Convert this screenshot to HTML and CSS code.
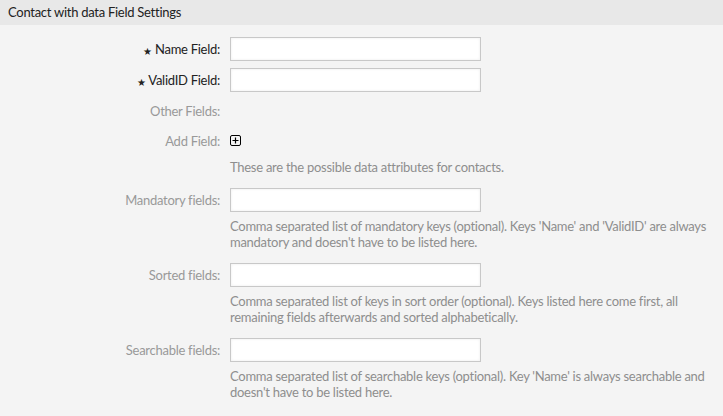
FILE: index.html
```html
<!DOCTYPE html>
<html lang="en">
<head>
    <meta charset="UTF-8">
    <title>Contact with data Field Settings</title>
    <link rel="stylesheet" href="styles.css">
</head>
<body>
    <div class="widget">
        <div class="widget-header">
            <h2>Contact with data Field Settings</h2>
        </div>
        <div class="widget-content">
            <fieldset class="table-like">
                <label class="mandatory" for="NameField"><span class="marker">&#9733;</span> Name Field:</label>
                <div class="field"><input type="text" id="NameField"></div>

                <label class="mandatory" for="ValidIDField"><span class="marker">&#9733;</span> ValidID Field:</label>
                <div class="field"><input type="text" id="ValidIDField"></div>

                <label>Other Fields:</label>
                <div class="field"></div>

                <label>Add Field:</label>
                <div class="field">
                    <a href="#" class="add-field" title="Add Field">
                        <svg width="11" height="11" viewBox="0 0 11 11">
                            <rect x="0.5" y="0.5" width="10" height="10" rx="1.5" fill="none" stroke="#000" stroke-width="1"/>
                            <path d="M5.5 2.5v6M2.5 5.5h6" stroke="#000" stroke-width="1.2"/>
                        </svg>
                    </a>
                    <p class="description">These are the possible data attributes for contacts.</p>
                </div>

                <label for="MandatoryFields">Mandatory fields:</label>
                <div class="field">
                    <input type="text" id="MandatoryFields">
                    <p class="description">Comma separated list of mandatory keys (optional). Keys 'Name' and 'ValidID' are always mandatory and doesn't have to be listed here.</p>
                </div>

                <label for="SortedFields">Sorted fields:</label>
                <div class="field">
                    <input type="text" id="SortedFields">
                    <p class="description">Comma separated list of keys in sort order (optional). Keys listed here come first, all remaining fields afterwards and sorted alphabetically.</p>
                </div>

                <label for="SearchableFields">Searchable fields:</label>
                <div class="field">
                    <input type="text" id="SearchableFields">
                    <p class="description">Comma separated list of searchable keys (optional). Key 'Name' is always searchable and doesn't have to be listed here.</p>
                </div>
            </fieldset>
        </div>
    </div>
</body>
</html>
```

FILE: styles.css
```css
* {
    margin: 0;
    padding: 0;
    box-sizing: border-box;
}

body {
    font-family: Lato, "Open Sans", sans-serif;
    font-size: 13px;
    letter-spacing: -0.27px;
    color: #333;
    background: #f4f4f4;
}

.widget-header {
    background: #e8e8e8;
    height: 25px;
    padding: 0 8px;
}

.widget-header h2 {
    font-size: 13px;
    font-weight: normal;
    line-height: 25px;
    color: #222;
}

.widget-content {
    padding: 12px 8px 20px;
}

.table-like {
    border: none;
    display: grid;
    grid-template-columns: 212px 1fr;
    column-gap: 10px;
    row-gap: 6px;
}

.table-like label {
    text-align: right;
    color: #999;
    line-height: 24px;
}

.table-like label.mandatory {
    color: #222;
}

.marker {
    font-size: 10px;
    position: relative;
    top: 1px;
}

.field {
    min-height: 24px;
}

.field input {
    display: block;
    width: 251px;
    height: 24px;
    border: 1px solid #c8c8c8;
    background: #fff;
    box-shadow: inset 0 0 3px rgba(0,0,0,0.08);
    font: inherit;
}

.add-field {
    display: block;
    height: 24px;
    padding-top: 6px;
}

.add-field svg {
    display: block;
}

.description {
    color: #8e8e8e;
    line-height: 16.5px;
    margin: 6px 0;
    padding-right: 8px;
}
```
